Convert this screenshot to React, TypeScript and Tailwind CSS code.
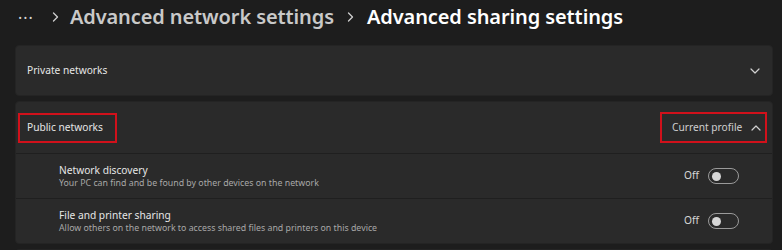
import React from "react";

function ChevronDown() {
  return (
    <svg width="10" height="6" viewBox="0 0 10 6" fill="none">
      <path d="M1 1l4 4 4-4" stroke="#d0d0d0" strokeWidth="1.2" strokeLinecap="round" strokeLinejoin="round" />
    </svg>
  );
}

function ChevronUp() {
  return (
    <svg width="10" height="6" viewBox="0 0 10 6" fill="none">
      <path d="M1 5l4-4 4 4" stroke="#d0d0d0" strokeWidth="1.2" strokeLinecap="round" strokeLinejoin="round" />
    </svg>
  );
}

function Crumb() {
  return (
    <svg width="7" height="10" viewBox="0 0 7 10" fill="none">
      <path d="M1.5 1l4 4-4 4" stroke="#cfcfcf" strokeWidth="1.3" strokeLinecap="round" strokeLinejoin="round" />
    </svg>
  );
}

function Toggle() {
  return (
    <div className="flex h-[16px] w-[31px] shrink-0 items-center rounded-full border border-[#9a9a9a] px-[3px]">
      <div className="h-[9px] w-[9px] rounded-full bg-[#d6d6d6]" />
    </div>
  );
}

const rows = [
  {
    title: "Network discovery",
    desc: "Your PC can find and be found by other devices on the network",
  },
  {
    title: "File and printer sharing",
    desc: "Allow others on the network to access shared files and printers on this device",
  },
];

export default function App() {
  return (
    <div
      className="h-[250px] w-[782px] overflow-hidden bg-[#1d1d1d] text-white"
      style={{ fontFamily: '"Noto Sans", "Open Sans", sans-serif' }}
    >
      {/* breadcrumb */}
      <div className="flex h-[33px] items-center whitespace-nowrap pl-[18px]">
        <span className="-mt-[8px] text-[16px] leading-none tracking-[1px] text-[#d6d6d6]">...</span>
        <span className="ml-[18px] mr-[11px] flex items-center">
          <Crumb />
        </span>
        <span className="text-[20px] font-semibold tracking-[-0.1px] text-[#c9c9c9]">Advanced network settings</span>
        <span className="ml-[13px] mr-[13px] flex items-center">
          <Crumb />
        </span>
        <span className="text-[20px] font-semibold tracking-[-0.1px] text-white">Advanced sharing settings</span>
      </div>

      <div className="flex flex-col gap-[5px] pl-[15px] pr-[9px] pt-[12px]">
        {/* Private networks */}
        <div className="flex h-[51px] items-center justify-between rounded-[4px] border border-[#242424] bg-[#2a2a2a] pl-[11px] pr-[12px]">
          <span className="text-[10.2px] text-[#e6e6e6]">Private networks</span>
          <ChevronDown />
        </div>

        {/* Public networks */}
        <div className="flex flex-col overflow-hidden rounded-[4px] border border-[#242424] bg-[#2a2a2a]">
          <div className="flex h-[51px] items-center justify-between pl-[2px] pr-[5px]">
            <div className="flex h-[30px] w-[99px] items-center border-2 border-[#d1111b] pl-[7px]">
              <span className="text-[10.2px] text-[#e6e6e6]">Public networks</span>
            </div>
            <div className="flex h-[31px] w-[107px] shrink-0 items-center justify-between whitespace-nowrap border-2 border-[#d1111b] pl-[10px] pr-[4px]">
              <span className="text-[10.2px] text-[#cfcfcf]">Current profile</span>
              <ChevronUp />
            </div>
          </div>
          {rows.map((r) => (
            <div key={r.title} className="flex h-[45px] items-center justify-between border-t border-[#1f1f1f] pl-[43px] pr-[33px]">
              <div className="flex flex-col whitespace-nowrap">
                <span className="text-[10.2px] leading-[14px] text-[#e6e6e6]">{r.title}</span>
                <span className="text-[8.8px] leading-[13px] text-[#a8a8a8]">{r.desc}</span>
              </div>
              <div className="flex items-center gap-[9px]">
                <span className="text-[10.2px] text-[#d8d8d8]">Off</span>
                <Toggle />
              </div>
            </div>
          ))}
        </div>

        <div className="h-[40px] rounded-[4px] border border-[#242424] bg-[#2a2a2a]" />
      </div>
    </div>
  );
}
